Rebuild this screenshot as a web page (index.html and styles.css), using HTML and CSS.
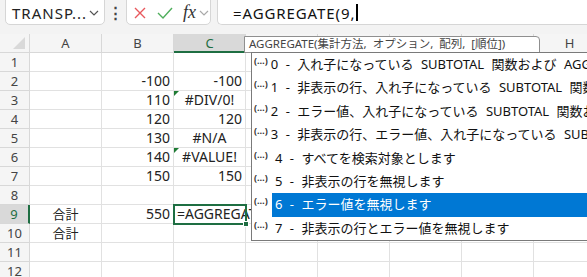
FILE: index.html
```html
<!DOCTYPE html>
<html lang="ja">
<head>
    <meta charset="UTF-8">
    <title>AGGREGATE</title>
    <link rel="stylesheet" href="styles.css">
</head>
<body>
    <div class="toolbar">
        <div class="namebox">
            <span>TRANSP...</span>
            <svg class="chev" width="10" height="6" viewBox="0 0 10 6"><polyline points="1,1 5,5 9,1" fill="none" stroke="#555" stroke-width="1.2"/></svg>
        </div>
        <div class="dots">⋮</div>
        <div class="fxbox">
            <svg width="14" height="14" viewBox="0 0 14 14"><path d="M2 2 L12 12 M12 2 L2 12" stroke="#e8585d" stroke-width="1.4" fill="none"/></svg>
            <svg width="16" height="14" viewBox="0 0 16 14"><polyline points="1,7 6,12 15,2" stroke="#4fae5c" stroke-width="1.4" fill="none"/></svg>
            <span class="fx">fx</span>
            <svg width="10" height="6" viewBox="0 0 10 6"><polyline points="1,1 5,5 9,1" fill="none" stroke="#aaa" stroke-width="1.2"/></svg>
        </div>
        <div class="formula">=AGGREGATE(9,<span class="caret"></span></div>
    </div>

    <div class="sheet">
        <div class="corner"><span class="tri"></span></div>
        <div class="colhead">A</div>
        <div class="colhead">B</div>
        <div class="colhead sel">C</div>
        <div class="colhead">D</div>
        <div class="colhead">E</div>
        <div class="colhead">F</div>
        <div class="colhead">G</div>
        <div class="colhead">H</div>

        <div class="rowhead">1</div><div class="cell"></div><div class="cell"></div><div class="cell"></div><div class="cell"></div><div class="cell"></div><div class="cell"></div><div class="cell"></div><div class="cell"></div>
        <div class="rowhead">2</div><div class="cell"></div><div class="cell num">-100</div><div class="cell num">-100</div><div class="cell"></div><div class="cell"></div><div class="cell"></div><div class="cell"></div><div class="cell"></div>
        <div class="rowhead">3</div><div class="cell"></div><div class="cell num">110</div><div class="cell err flag">#DIV/0!</div><div class="cell"></div><div class="cell"></div><div class="cell"></div><div class="cell"></div><div class="cell"></div>
        <div class="rowhead">4</div><div class="cell"></div><div class="cell num">120</div><div class="cell num">120</div><div class="cell"></div><div class="cell"></div><div class="cell"></div><div class="cell"></div><div class="cell"></div>
        <div class="rowhead">5</div><div class="cell"></div><div class="cell num">130</div><div class="cell err">#N/A</div><div class="cell"></div><div class="cell"></div><div class="cell"></div><div class="cell"></div><div class="cell"></div>
        <div class="rowhead">6</div><div class="cell"></div><div class="cell num">140</div><div class="cell err flag">#VALUE!</div><div class="cell"></div><div class="cell"></div><div class="cell"></div><div class="cell"></div><div class="cell"></div>
        <div class="rowhead">7</div><div class="cell"></div><div class="cell num">150</div><div class="cell num">150</div><div class="cell"></div><div class="cell"></div><div class="cell"></div><div class="cell"></div><div class="cell"></div>
        <div class="rowhead">8</div><div class="cell"></div><div class="cell"></div><div class="cell"></div><div class="cell"></div><div class="cell"></div><div class="cell"></div><div class="cell"></div><div class="cell"></div>
        <div class="rowhead sel">9</div><div class="cell mid">合計</div><div class="cell num">550</div><div class="cell active">=AGGREGATE(9,<span class="handle"></span></div><div class="cell"></div><div class="cell"></div><div class="cell"></div><div class="cell"></div><div class="cell"></div>
        <div class="rowhead">10</div><div class="cell mid">合計</div><div class="cell"></div><div class="cell"></div><div class="cell"></div><div class="cell"></div><div class="cell"></div><div class="cell"></div><div class="cell"></div>
        <div class="rowhead">11</div><div class="cell"></div><div class="cell"></div><div class="cell"></div><div class="cell"></div><div class="cell"></div><div class="cell"></div><div class="cell"></div><div class="cell"></div>
        <div class="rowhead">12</div><div class="cell"></div><div class="cell"></div><div class="cell"></div><div class="cell"></div><div class="cell"></div><div class="cell"></div><div class="cell"></div><div class="cell"></div>
    </div>

    <div class="tip">AGGREGATE(集計方法, オプション, 配列, [順位])</div>

    <ul class="options">
        <li><span class="ico">(…)</span><span class="label">0 - 入れ子になっている SUBTOTAL 関数および AGGREGATE 関数を無視します</span></li>
        <li><span class="ico">(…)</span><span class="label">1 - 非表示の行、入れ子になっている SUBTOTAL 関数および AGGREGATE 関数を無視します</span></li>
        <li><span class="ico">(…)</span><span class="label">2 - エラー値、入れ子になっている SUBTOTAL 関数および AGGREGATE 関数を無視します</span></li>
        <li><span class="ico">(…)</span><span class="label">3 - 非表示の行、エラー値、入れ子になっている SUBTOTAL 関数および AGGREGATE 関数を無視します</span></li>
        <li><span class="ico">(…)</span><span class="label">4 - すべてを検索対象とします</span></li>
        <li><span class="ico">(…)</span><span class="label">5 - 非表示の行を無視します</span></li>
        <li class="current"><span class="ico">(…)</span><span class="label">6 - エラー値を無視します</span></li>
        <li><span class="ico">(…)</span><span class="label">7 - 非表示の行とエラー値を無視します</span></li>
    </ul>
</body>
</html>
```

FILE: styles.css
```css
* {
    box-sizing: border-box;
}
body {
    margin: 0;
    width: 587px;
    height: 277px;
    overflow: hidden;
    position: relative;
    background: #f3f3f3;
    font-family: "Noto Sans", "Noto Sans CJK JP", sans-serif;
    color: #222;
}
.toolbar {
    display: flex;
    height: 34px;
    align-items: flex-start;
}
.namebox, .fxbox, .formula {
    margin-top: -5px;
    height: 30px;
    background: #fff;
    border: 1px solid #d6d6d6;
    border-radius: 5px;
    display: flex;
    align-items: center;
    padding-top: 5px;
}
.namebox {
    margin-left: 5px;
    width: 100px;
    padding-left: 6px;
    padding-right: 5px;
    font-size: 15px;
    letter-spacing: 1px;
    color: #222;
}
.namebox .chev {
    margin-left: auto;
}
.dots {
    width: 21px;
    text-align: center;
    font-size: 15px;
    font-weight: bold;
    line-height: 25px;
    color: #444;
}
.fxbox {
    width: 85px;
    padding-left: 6px;
}
.fxbox svg:nth-child(1) {
    margin-right: 10px;
}
.fxbox svg:nth-child(2) {
    margin-right: 10px;
}
.fx {
    font-family: "Liberation Serif", serif;
    font-style: italic;
    font-size: 18px;
    color: #333;
    margin-right: 3px;
}
.formula {
    margin-left: 6px;
    flex: 1;
    border-radius: 5px 0 0 5px;
    border-right: none;
    padding-left: 15px;
    font-size: 15px;
    letter-spacing: 0.9px;
    color: #111;
}
.caret {
    display: inline-block;
    width: 2px;
    height: 17px;
    background: #000;
    margin-left: 1px;
}

.sheet {
    display: grid;
    grid-template-columns: 30px repeat(8, 72px);
    grid-auto-rows: 19px;
    background: #fff;
    font-size: 14px;
}
.corner, .colhead, .rowhead {
    background: #f5f5f5;
    color: #444;
    font-size: 13px;
    border-right: 1px solid #d8d8d8;
    border-bottom: 1px solid #d8d8d8;
}
.corner {
    position: relative;
}
.corner .tri {
    position: absolute;
    right: 4px;
    bottom: 3px;
    border-left: 12px solid transparent;
    border-bottom: 12px solid #d9d9d9;
}
.colhead {
    text-align: center;
    line-height: 18px;
}
.colhead.sel {
    background: #d9d9d9;
    color: #1e6e42;
    border-bottom: 2px solid #1e6e42;
}
.rowhead {
    text-align: center;
    line-height: 18px;
}
.rowhead.sel {
    background: #d9d9d9;
    color: #1e6e42;
    border-right: 2px solid #1e6e42;
}
.cell {
    border-right: 1px solid #e1e1e1;
    border-bottom: 1px solid #e1e1e1;
    line-height: 18px;
    padding: 0 3px;
    white-space: nowrap;
    position: relative;
}
.num {
    text-align: right;
}
.err, .mid {
    text-align: center;
}
.mid {
    font-size: 13px;
}
.flag::before {
    content: "";
    position: absolute;
    left: 0;
    top: 0;
    border-top: 5px solid #1e7b34;
    border-right: 5px solid transparent;
}
.active {
    outline: 2px solid #1e6e42;
    outline-offset: -1px;
    overflow: visible;
    z-index: 1;
}
.handle {
    position: absolute;
    right: -4px;
    bottom: -4px;
    width: 6px;
    height: 6px;
    background: #1e6e42;
    border: 1px solid #fff;
}

.tip {
    position: absolute;
    left: 244px;
    top: 36px;
    width: 296px;
    height: 17px;
    background: #fff;
    border: 1px solid #8f8f8f;
    border-radius: 0 4px 0 0;
    font-size: 11.5px;
    word-spacing: 3px;
    line-height: 14px;
    padding-left: 4px;
    color: #444;
    white-space: nowrap;
    z-index: 2;
}
.options {
    position: absolute;
    left: 251px;
    top: 52px;
    width: 400px;
    margin: 0;
    padding: 0;
    list-style: none;
    background: #fff;
    border: 1px solid #7a7a7a;
    z-index: 3;
}
.options li {
    display: flex;
    height: 23.4px;
    align-items: stretch;
    white-space: nowrap;
}
.ico {
    width: 20px;
    font-size: 9px;
    line-height: 16px;
    padding-left: 2px;
    color: #333;
    font-weight: bold;
}
.label {
    flex: 1;
    padding-left: 3px;
    font-size: 13px;
    word-spacing: 4px;
    line-height: 23px;
    color: #111;
}
.current .label {
    background: #0078d4;
    color: #fff;
}
```
